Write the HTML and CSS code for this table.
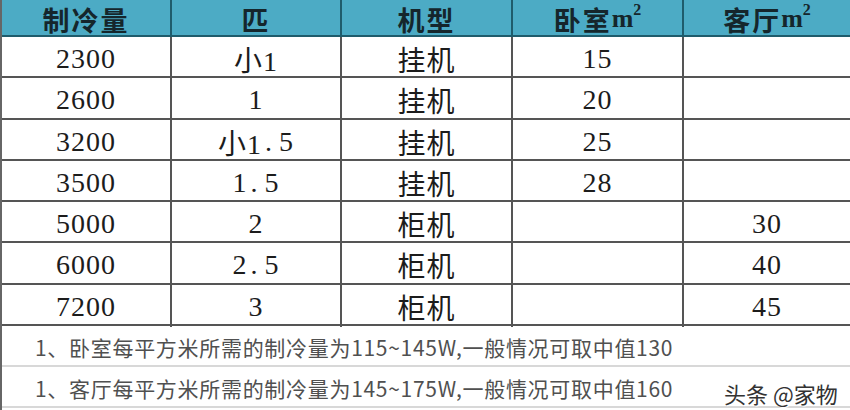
FILE: index.html
```html
<!DOCTYPE html>
<html lang="zh">
<head>
<meta charset="utf-8">
<link rel="stylesheet" href="styles.css">
</head>
<body>
<div class="sheet">
  <div class="row head">
    <div class="cell">制冷量</div>
    <div class="cell">匹</div>
    <div class="cell">机型</div>
    <div class="cell">卧室<span class="m">m<sup>2</sup></span></div>
    <div class="cell">客厅<span class="m">m<sup>2</sup></span></div>
  </div>
  <div class="row"><div class="cell">2300</div><div class="cell">小1</div><div class="cell">挂机</div><div class="cell">15</div><div class="cell"></div></div>
  <div class="row"><div class="cell">2600</div><div class="cell">1</div><div class="cell">挂机</div><div class="cell">20</div><div class="cell"></div></div>
  <div class="row"><div class="cell">3200</div><div class="cell">小1<span class="dot">.</span>5</div><div class="cell">挂机</div><div class="cell">25</div><div class="cell"></div></div>
  <div class="row"><div class="cell">3500</div><div class="cell">1<span class="dot">.</span>5</div><div class="cell">挂机</div><div class="cell">28</div><div class="cell"></div></div>
  <div class="row"><div class="cell">5000</div><div class="cell">2</div><div class="cell">柜机</div><div class="cell"></div><div class="cell">30</div></div>
  <div class="row"><div class="cell">6000</div><div class="cell">2<span class="dot">.</span>5</div><div class="cell">柜机</div><div class="cell"></div><div class="cell">40</div></div>
  <div class="row"><div class="cell">7200</div><div class="cell">3</div><div class="cell">柜机</div><div class="cell"></div><div class="cell">45</div></div>
  <div class="note">1、卧室每平方米所需的制冷量为115~145W,一般情况可取中值130</div>
  <div class="note">1、客厅每平方米所需的制冷量为145~175W,一般情况可取中值160</div>
  <div class="mark">头条 @家物</div>
</div>
</body>
</html>
```
FILE: styles.css
```css
html, body {
  margin: 0;
  padding: 0;
  background: #ffffff;
}
.sheet {
  position: relative;
  width: 850px;
  height: 410px;
  overflow: hidden;
  border-left: 2px solid #666;
  box-sizing: border-box;
}
.row {
  display: grid;
  grid-template-columns: 170px 170px 171px 171px 1fr;
  height: 41.3px;
  box-sizing: border-box;
  border-bottom: 2px solid #555;
  font-family: "Liberation Serif", "Noto Sans CJK SC", serif;
  font-size: 28px;
  color: #1c1c1c;
}
.row .cell {
  display: flex;
  align-items: center;
  justify-content: center;
  border-right: 2px solid #555;
  padding-top: 2px;
  box-sizing: border-box;
  letter-spacing: 1px;
}
.row .cell:last-child {
  border-right: none;
}
.dot {
  padding: 0 6px 0 3px;
}
.head {
  height: 37px;
  background: #4cabc5;
  border-bottom: 2px solid #1f5c6c;
  font-weight: bold;
  color: #15262c;
  font-size: 27px;
}
.head .cell {
  border-right-color: #1f5c6c;
  padding-top: 0;
  letter-spacing: 2px;
}
.m {
  font-family: "Liberation Serif", serif;
  font-weight: bold;
  font-size: 26px;
  letter-spacing: 0;
  position: relative;
  top: -1px;
}
.m sup {
  font-size: 16px;
  vertical-align: 12px;
  line-height: 0;
}
.note {
  height: 41px;
  box-sizing: border-box;
  border-bottom: 2px solid #d8d8d8;
  display: flex;
  align-items: center;
  padding-left: 33px;
  padding-top: 2px;
  font-family: "Noto Sans CJK SC", "Noto Sans", sans-serif;
  font-size: 21px;
  letter-spacing: 0.7px;
  color: #505050;
}
.mark {
  position: absolute;
  left: 722px;
  top: 377px;
  font-family: "Noto Sans CJK SC", sans-serif;
  font-size: 22px;
  color: #333;
  text-shadow: 1px 1px 0 #fff, -1px -1px 0 #fff;
}
```
